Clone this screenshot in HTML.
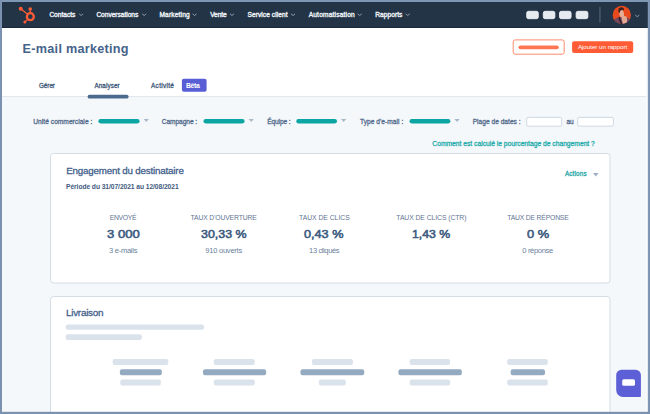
<!DOCTYPE html>
<html><head><meta charset="utf-8">
<style>
*{box-sizing:border-box;margin:0;padding:0}
html,body{width:650px;height:414px;overflow:hidden;background:#f5f8fa}
body{position:relative;font-family:"Liberation Sans",sans-serif}
.a{position:absolute;white-space:nowrap;line-height:1}
#ov{position:absolute;left:0;top:0}
</style></head><body>
<svg id="ov" width="650" height="414" viewBox="0 0 650 414">
  <!-- page bg -->
  <rect x="0" y="0" width="650" height="414" fill="#f5f8fa"/>
  <!-- nav -->
  <rect x="0" y="2" width="650" height="26" fill="#233446"/>
  <rect x="0" y="27.2" width="650" height="0.8" fill="#1a2735"/>
  <!-- header -->
  <rect x="0" y="28" width="650" height="68" fill="#ffffff"/>
  <rect x="0" y="96" width="650" height="1" fill="#e2e7ee"/>
  <!-- logo -->
  <g fill="none" stroke="#ff5c35">
    <circle cx="30.35" cy="16.65" r="3.45" stroke-width="2.3"/>
    <line x1="20.7" y1="8.8" x2="28" y2="14.4" stroke-width="1.2"/>
    <line x1="30.2" y1="9" x2="30.2" y2="13" stroke-width="1.3"/>
    <line x1="24.8" y1="22.1" x2="28" y2="19" stroke-width="1.2"/>
  </g>
  <g fill="#ff5c35">
    <circle cx="20.7" cy="8.8" r="2"/>
    <circle cx="30.2" cy="9" r="1.8"/>
    <circle cx="24.8" cy="22.1" r="1.5"/>
  </g>
  <!-- nav chevrons -->
  <g fill="none" stroke="#9aa7b5" stroke-width="0.9" stroke-linecap="round" stroke-linejoin="round">
    <polyline points="79.4,14.1 81.1,15.5 82.8,14.1"/>
    <polyline points="142.5,14.1 144.2,15.5 145.9,14.1"/>
    <polyline points="192.9,14.1 194.6,15.5 196.3,14.1"/>
    <polyline points="230.3,14.1 232,15.5 233.7,14.1"/>
    <polyline points="291.3,14.1 293,15.5 294.7,14.1"/>
    <polyline points="358,14.1 359.7,15.5 361.4,14.1"/>
    <polyline points="406,14.1 407.7,15.5 409.4,14.1"/>
    <polyline points="635.6,15.3 637.3,16.7 639,15.3"/>
  </g>
  <!-- nav right rects -->
  <g fill="#e6ebf1" stroke="#f7f9fb" stroke-width="0.8">
    <rect x="526.7" y="11.3" width="11.6" height="7.4" rx="1.8"/>
    <rect x="543.3" y="11.3" width="11.6" height="7.4" rx="1.8"/>
    <rect x="559.5" y="11.3" width="11.6" height="7.4" rx="1.8"/>
    <rect x="576.1" y="11.3" width="11.8" height="7.4" rx="1.8"/>
  </g>
  <rect x="599.3" y="6.8" width="1.3" height="15.7" fill="#4d5e70"/>
  <!-- header buttons -->
  <rect x="513.2" y="39.9" width="51" height="14.3" rx="2" fill="#fff" stroke="#ff8a6c" stroke-width="1"/>
  <rect x="518.5" y="45.4" width="40.3" height="3.9" rx="1.95" fill="#ff7654"/>
  <rect x="572.1" y="41.2" width="61.1" height="11.7" rx="2" fill="#ff5c35"/>
  <!-- tabs -->
  <rect x="181.9" y="78.8" width="24.7" height="12.9" rx="2" fill="#5a5ed5"/>
  <rect x="87.6" y="94.8" width="41" height="3.7" rx="1.85" fill="#4b6a8d"/>
  <!-- filters -->
  <g fill="#0ba5a4">
    <rect x="98.4" y="119.1" width="41.2" height="4.3" rx="2.15"/>
    <rect x="203.5" y="119.1" width="41.1" height="4.3" rx="2.15"/>
    <rect x="296.3" y="119.1" width="40.7" height="4.3" rx="2.15"/>
    <rect x="409.5" y="119.1" width="40.9" height="4.3" rx="2.15"/>
  </g>
  <g fill="#a9b8c9">
    <polygon points="143.6,118.9 148.9,118.9 146.25,122.1"/>
    <polygon points="248.6,118.9 253.9,118.9 251.25,122.1"/>
    <polygon points="341,118.9 346.3,118.9 343.65,122.1"/>
    <polygon points="454.4,118.9 459.7,118.9 457.05,122.1"/>
  </g>
  <rect x="526.7" y="117.4" width="35" height="8.8" rx="1.5" fill="#fff" stroke="#cfd8e3" stroke-width="1"/>
  <rect x="577.7" y="117.4" width="35.7" height="8.8" rx="1.5" fill="#fff" stroke="#cfd8e3" stroke-width="1"/>
  <!-- card 1 -->
  <rect x="50.5" y="153.5" width="559.5" height="129.5" rx="3" fill="#fff" stroke="#d4dce5" stroke-width="1"/>
  <polygon points="593,173.1 598.6,173.1 595.8,176.5" fill="#9cb0c5"/>
  <!-- card 2 -->
  <rect x="50.5" y="296.5" width="559.5" height="140" rx="3" fill="#fff" stroke="#d4dce5" stroke-width="1"/>
  <g fill="#dae2eb">
    <rect x="65.8" y="324.4" width="138.2" height="5.4" rx="2"/>
    <rect x="65.8" y="334.2" width="76" height="5.9" rx="2"/>
    <rect x="112.7" y="359" width="55.6" height="6" rx="2"/>
    <rect x="120.3" y="379.4" width="40.6" height="6" rx="2"/>
    <rect x="213.8" y="359" width="40.9" height="6" rx="2"/>
    <rect x="213.8" y="379.4" width="40.9" height="6" rx="2"/>
    <rect x="311.9" y="359" width="41.1" height="6" rx="2"/>
    <rect x="318.9" y="379.4" width="26.9" height="6" rx="2"/>
    <rect x="409.7" y="359" width="40.4" height="6" rx="2"/>
    <rect x="409.7" y="379.4" width="40.4" height="6" rx="2"/>
    <rect x="507.2" y="359" width="40.6" height="6" rx="2"/>
    <rect x="507.2" y="379.4" width="40.6" height="6" rx="2"/>
  </g>
  <g fill="#93aac1">
    <rect x="119.9" y="369.3" width="41.9" height="6" rx="2"/>
    <rect x="203" y="369.3" width="63.1" height="6" rx="2"/>
    <rect x="300.5" y="369.3" width="63.7" height="6" rx="2"/>
    <rect x="398.4" y="369.3" width="63.4" height="6" rx="2"/>
    <rect x="510.7" y="369.3" width="34.3" height="6" rx="2"/>
  </g>
  <!-- chat -->
  <path d="M621.6,369.8 H635.6 A5.3,5.3 0 0 1 640.9,375.1 V396.2 Q640.9,396.9 640.2,396.9 H623 A6.8,6.8 0 0 1 616.2,390.1 V375.1 A5.3,5.3 0 0 1 621.6,369.8 Z" fill="#5c5fd6"/>
  <rect x="622.2" y="379.2" width="12.8" height="6.6" rx="1.6" fill="#fff"/>
</svg>
<svg class="a" style="left:612px;top:5px" width="20" height="20" viewBox="612 5 20 20">
  <defs><clipPath id="av"><circle cx="621.8" cy="14.9" r="9.15"/></clipPath></defs>
  <circle cx="621.8" cy="14.9" r="9.15" fill="#e84a1e"/>
  <g clip-path="url(#av)">
    <path d="M612 25 L613.5 20 Q616 17.8 619 17.2 L624 16.8 Q628 17.2 630.5 19.5 L632 25 Z" fill="#744660"/>
    <path d="M618.3 17.4 L619.6 17.1 L622.6 25 L621 25 Z" fill="#2a1a22"/>
    <path d="M622 16.5 Q624.5 15.2 626.6 16.8 Q627.4 19.5 626.8 23 L623.2 25 L621.6 19 Z" fill="#e0a994"/>
    <ellipse cx="621.6" cy="13.6" rx="2.3" ry="3.9" transform="rotate(-12 621.6 13.6)" fill="#e4ae98"/>
    <path d="M618.4 11.8 Q617.8 7.6 621.2 7.3 Q624.4 7.4 623.9 10.2 Q622.4 9.4 620.4 10.6 L619.6 13.2 Z" fill="#3b231e"/>
  </g>
</svg>
<span class="a" id="n1" style="left:49.38px;top:11.61px;font-size:6.60px;letter-spacing:-0.014px;font-weight:normal;color:#eef2f6;-webkit-text-stroke:0.36px #eef2f6">Contacts</span>
<span class="a" id="n2" style="left:96.38px;top:11.61px;font-size:6.60px;letter-spacing:-0.020px;font-weight:normal;color:#eef2f6;-webkit-text-stroke:0.36px #eef2f6">Conversations</span>
<span class="a" id="n3" style="left:159.38px;top:11.61px;font-size:6.60px;letter-spacing:0.183px;font-weight:normal;color:#eef2f6;-webkit-text-stroke:0.36px #eef2f6">Marketing</span>
<span class="a" id="n4" style="left:210.18px;top:11.61px;font-size:6.60px;letter-spacing:-0.085px;font-weight:normal;color:#eef2f6;-webkit-text-stroke:0.36px #eef2f6">Vente</span>
<span class="a" id="n5" style="left:247.58px;top:11.61px;font-size:6.60px;letter-spacing:0.054px;font-weight:normal;color:#eef2f6;-webkit-text-stroke:0.36px #eef2f6">Service client</span>
<span class="a" id="n6" style="left:308.68px;top:11.61px;font-size:6.60px;letter-spacing:0.192px;font-weight:normal;color:#eef2f6;-webkit-text-stroke:0.36px #eef2f6">Automatisation</span>
<span class="a" id="n7" style="left:375.18px;top:11.61px;font-size:6.60px;letter-spacing:0.066px;font-weight:normal;color:#eef2f6;-webkit-text-stroke:0.36px #eef2f6">Rapports</span>
<span class="a" id="title" style="left:22.60px;top:42.50px;font-size:12.65px;letter-spacing:0.273px;font-weight:bold;color:#46638a">E-mail marketing</span>
<span class="a" id="addr" style="left:577.90px;top:44.01px;font-size:6.25px;letter-spacing:-0.043px;font-weight:normal;color:#ffffff">Ajouter un rapport</span>
<span class="a" id="t1" style="left:39.04px;top:82.88px;font-size:6.28px;letter-spacing:-0.033px;font-weight:normal;color:#3d5878;-webkit-text-stroke:0.28px #3d5878">Gérer</span>
<span class="a" id="t2" style="left:94.44px;top:82.88px;font-size:6.28px;letter-spacing:0.113px;font-weight:normal;color:#3d5878;-webkit-text-stroke:0.28px #3d5878">Analyser</span>
<span class="a" id="t3" style="left:151.04px;top:83.46px;font-size:6.42px;letter-spacing:0.316px;font-weight:normal;color:#3d5878;-webkit-text-stroke:0.28px #3d5878">Activité</span>
<span class="a" id="t4" style="left:185.90px;top:83.12px;font-size:6.83px;letter-spacing:-0.284px;font-weight:bold;color:#ffffff">Bêta</span>
<span class="a" id="f1" style="left:33.34px;top:119.24px;font-size:6.57px;letter-spacing:0.054px;font-weight:normal;color:#50698a;-webkit-text-stroke:0.28px #50698a">Unité commerciale :</span>
<span class="a" id="f2" style="left:161.74px;top:119.24px;font-size:6.57px;letter-spacing:-0.041px;font-weight:normal;color:#50698a;-webkit-text-stroke:0.28px #50698a">Campagne :</span>
<span class="a" id="f3" style="left:267.14px;top:119.24px;font-size:6.57px;letter-spacing:-0.084px;font-weight:normal;color:#50698a;-webkit-text-stroke:0.28px #50698a">Équipe :</span>
<span class="a" id="f4" style="left:359.94px;top:119.24px;font-size:6.57px;letter-spacing:0.058px;font-weight:normal;color:#50698a;-webkit-text-stroke:0.28px #50698a">Type d'e-mail :</span>
<span class="a" id="f5" style="left:472.64px;top:119.24px;font-size:6.57px;letter-spacing:0.036px;font-weight:normal;color:#50698a;-webkit-text-stroke:0.28px #50698a">Plage de dates :</span>
<span class="a" id="f6" style="left:566.44px;top:119.24px;font-size:6.57px;letter-spacing:-0.188px;font-weight:normal;color:#50698a;-webkit-text-stroke:0.28px #50698a">au</span>
<span class="a" id="link" style="left:432.34px;top:141.12px;font-size:6.72px;letter-spacing:-0.007px;font-weight:normal;color:#22abab;-webkit-text-stroke:0.28px #22abab">Comment est calculé le pourcentage de changement ?</span>
<span class="a" id="c1t" style="left:66.14px;top:166.13px;font-size:9.77px;letter-spacing:-0.178px;font-weight:normal;color:#42608a;-webkit-text-stroke:0.28px #42608a">Engagement du destinataire</span>
<span class="a" id="c1p" style="left:66.00px;top:183.54px;font-size:6.69px;letter-spacing:-0.066px;font-weight:bold;color:#3f5b80">Période du 31/07/2021 au 12/08/2021</span>
<span class="a" id="act" style="left:564.94px;top:171.18px;font-size:6.28px;letter-spacing:0.171px;font-weight:normal;color:#1ea6a6;-webkit-text-stroke:0.28px #1ea6a6">Actions</span>
<span class="a" id="s1l" style="left:109.70px;top:214.54px;font-size:6.80px;letter-spacing:-0.288px;font-weight:normal;color:#5f7594">ENVOYÉ</span>
<span class="a" id="s1v" style="left:106.88px;top:229.42px;font-size:11.56px;letter-spacing:0.000px;font-weight:normal;color:#3b5a80;-webkit-text-stroke:0.55px #3b5a80;transform:scaleX(1.1326);transform-origin:0.00px 0">3 000</span>
<span class="a" id="s1s" style="left:109.10px;top:247.15px;font-size:7.50px;letter-spacing:-0.266px;font-weight:normal;color:#6a7f9b">3 e-mails</span>
<span class="a" id="s2l" style="left:190.50px;top:214.54px;font-size:6.80px;letter-spacing:-0.133px;font-weight:normal;color:#5f7594">TAUX D'OUVERTURE</span>
<span class="a" id="s2v" style="left:201.08px;top:229.42px;font-size:11.56px;letter-spacing:0.000px;font-weight:normal;color:#3b5a80;-webkit-text-stroke:0.55px #3b5a80;transform:scaleX(1.0742);transform-origin:0.00px 0">30,33 %</span>
<span class="a" id="s2s" style="left:205.30px;top:247.15px;font-size:7.50px;letter-spacing:-0.229px;font-weight:normal;color:#6a7f9b">910 ouverts</span>
<span class="a" id="s3l" style="left:299.00px;top:214.54px;font-size:6.80px;letter-spacing:-0.015px;font-weight:normal;color:#5f7594">TAUX DE CLICS</span>
<span class="a" id="s3v" style="left:304.17px;top:229.42px;font-size:11.56px;letter-spacing:0.000px;font-weight:normal;color:#3b5a80;-webkit-text-stroke:0.55px #3b5a80;transform:scaleX(1.0966);transform-origin:0.00px 0">0,43 %</span>
<span class="a" id="s3s" style="left:309.10px;top:247.15px;font-size:7.50px;letter-spacing:-0.375px;font-weight:normal;color:#6a7f9b">13 cliqués</span>
<span class="a" id="s4l" style="left:396.30px;top:214.54px;font-size:6.80px;letter-spacing:-0.060px;font-weight:normal;color:#5f7594">TAUX DE CLICS (CTR)</span>
<span class="a" id="s4v" style="left:412.27px;top:229.42px;font-size:11.56px;letter-spacing:0.000px;font-weight:normal;color:#3b5a80;-webkit-text-stroke:0.55px #3b5a80;transform:scaleX(1.0632);transform-origin:0.00px 0">1,43 %</span>
<span class="a" id="s5l" style="left:507.20px;top:214.54px;font-size:6.80px;letter-spacing:-0.179px;font-weight:normal;color:#5f7594">TAUX DE RÉPONSE</span>
<span class="a" id="s5v" style="left:527.07px;top:229.42px;font-size:11.56px;letter-spacing:0.000px;font-weight:normal;color:#3b5a80;-webkit-text-stroke:0.55px #3b5a80;transform:scaleX(1.1124);transform-origin:0.00px 0">0 %</span>
<span class="a" id="s5s" style="left:522.30px;top:247.15px;font-size:7.50px;letter-spacing:-0.320px;font-weight:normal;color:#6a7f9b">0 réponse</span>
<span class="a" id="c2t" style="left:65.94px;top:308.31px;font-size:9.91px;letter-spacing:-0.256px;font-weight:normal;color:#42608a;-webkit-text-stroke:0.28px #42608a">Livraison</span>
<svg class="a" style="left:0;top:0" width="650" height="414" viewBox="0 0 650 414">
  <rect x="0" y="0" width="650" height="2" fill="#7d97b4"/>
  <rect x="0" y="0" width="2" height="414" fill="#7a92af"/>
  <defs><linearGradient id="rg" x1="0" x2="1" y1="0" y2="0"><stop offset="0" stop-color="#8aa0bb"/><stop offset="1" stop-color="#738cab"/></linearGradient></defs>
  <rect x="646.2" y="28" width="1.6" height="384" fill="#fafcfe"/>
  <rect x="647.8" y="0" width="2.2" height="414" fill="url(#rg)"/>
  <rect x="0" y="411.8" width="650" height="2.2" fill="#7a92af"/>
</svg>
</body></html>
